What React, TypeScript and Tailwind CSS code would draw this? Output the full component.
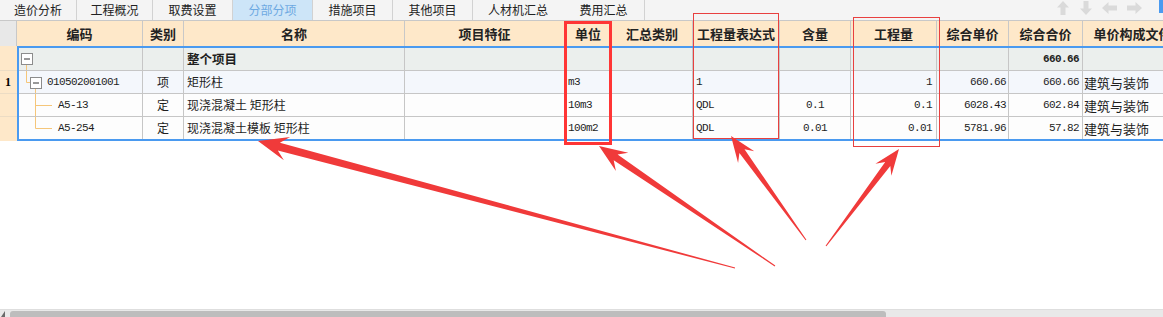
import React from "react";

type Tab = { t: string; w: string; active?: boolean; sep?: boolean };

const tabs: Tab[] = [
  { t: "造价分析", w: "w-[77px]", sep: true },
  { t: "工程概况", w: "w-[76px]", sep: true },
  { t: "取费设置", w: "w-[80px]", sep: true },
  { t: "分部分项", w: "w-[80px]", sep: true, active: true },
  { t: "措施项目", w: "w-[80px]", sep: true },
  { t: "其他项目", w: "w-[80px]", sep: true },
  { t: "人材机汇总", w: "w-[90px]" },
  { t: "费用汇总", w: "w-[82px]", sep: true },
];

type Col = { title: string; hw: string; bw: string };

const cols: Col[] = [
  { title: "编码", hw: "w-[126px]", bw: "w-[124px]" },
  { title: "类别", hw: "w-[41px]", bw: "w-[41px]" },
  { title: "名称", hw: "w-[221px]", bw: "w-[221px]" },
  { title: "项目特征", hw: "w-[160px]", bw: "w-[160px]" },
  { title: "单位", hw: "w-[47px]", bw: "w-[47px]" },
  { title: "汇总类别", hw: "w-[81px]", bw: "w-[81px]" },
  { title: "工程量表达式", hw: "w-[87px]", bw: "w-[87px]" },
  { title: "含量", hw: "w-[71px]", bw: "w-[71px]" },
  { title: "工程量", hw: "w-[86px]", bw: "w-[86px]" },
  { title: "综合单价", hw: "w-[72px]", bw: "w-[72px]" },
  { title: "综合合价", hw: "w-[74px]", bw: "w-[74px]" },
  { title: "单价构成文件", hw: "w-[100px]", bw: "w-[100px]" },
];

const MONO = "font-['Liberation_Mono',monospace] text-[11px] tracking-[-0.6px]";
const TREE = "#f5c67a";

function MinusBox({ x, y }: { x: number; y: number }) {
  return (
    <g>
      <rect x={x + 0.5} y={y + 0.5} width={11} height={11} fill="#ffffff" stroke="#8c8c8c" />
      <line x1={x + 3} y1={y + 6} x2={x + 9} y2={y + 6} stroke="#333333" />
    </g>
  );
}

function TreeArt({ level }: { level: number }) {
  return (
    <svg className="absolute left-0 top-0 pointer-events-none" width={124} height={23}>
      {level === 0 && (
        <>
          <line x1={7.5} y1={16} x2={7.5} y2={23} stroke={TREE} />
          <MinusBox x={2} y={5} />
        </>
      )}
      {level === 1 && (
        <>
          <line x1={7.5} y1={0} x2={7.5} y2={11.5} stroke={TREE} />
          <line x1={7.5} y1={11.5} x2={11} y2={11.5} stroke={TREE} />
          <line x1={16.5} y1={17} x2={16.5} y2={23} stroke={TREE} />
          <MinusBox x={11} y={6} />
        </>
      )}
      {level === 2 && (
        <>
          <line x1={16.5} y1={0} x2={16.5} y2={23} stroke={TREE} />
          <line x1={16.5} y1={11.5} x2={33} y2={11.5} stroke={TREE} />
        </>
      )}
      {level === 3 && (
        <>
          <line x1={16.5} y1={0} x2={16.5} y2={11.5} stroke={TREE} />
          <line x1={16.5} y1={11.5} x2={33} y2={11.5} stroke={TREE} />
        </>
      )}
    </svg>
  );
}

type Row = {
  bg: string;
  h: string;
  level: number;
  code: string;
  type: string;
  name: string;
  bold?: boolean;
  unit: string;
  expr: string;
  qty: string;
  amount: string;
  price: string;
  total: string;
  file: string;
  rn: string;
  last?: boolean;
};

const rows: Row[] = [
  { bg: "bg-[#ebefed]", h: "h-[23px]", level: 0, code: "", type: "", name: "整个项目", bold: true, unit: "", expr: "", qty: "", amount: "", price: "", total: "660.66", file: "", rn: "" },
  { bg: "bg-[#f4f7fc]", h: "h-[23px]", level: 1, code: "010502001001", type: "项", name: "矩形柱", unit: "m3", expr: "1", qty: "", amount: "1", price: "660.66", total: "660.66", file: "建筑与装饰", rn: "1" },
  { bg: "bg-[#fdfdfd]", h: "h-[23px]", level: 2, code: "A5-13", type: "定", name: "现浇混凝土 矩形柱", unit: "10m3", expr: "QDL", qty: "0.1", amount: "0.1", price: "6028.43", total: "602.84", file: "建筑与装饰", rn: "" },
  { bg: "bg-[#fdfdfd]", h: "h-[22px]", level: 3, code: "A5-254", type: "定", name: "现浇混凝土模板 矩形柱", unit: "100m2", expr: "QDL", qty: "0.01", amount: "0.01", price: "5781.96", total: "57.82", file: "建筑与装饰", rn: "", last: true },
];

const cell = "h-full shrink-0 flex items-center border-r border-[#c6c6c6] whitespace-nowrap overflow-hidden leading-none";

function TabBar() {
  return (
    <div className="h-[20px] shrink-0 bg-[#f4f4f4] flex items-stretch text-[12px] leading-none text-[#222]">
      {tabs.map((t) => (
        <div
          key={t.t}
          className={`${t.w} shrink-0 flex items-center justify-center ${t.active ? "bg-[#cde5f8] text-[#6da9e2]" : ""} ${t.sep ? "border-r border-[#d2d2d2]" : ""}`}
        >
          {t.t}
        </div>
      ))}
      <div className="flex-1" />
      <div className="flex items-start pt-[1px] shrink-0">
        <svg width={12} height={14} viewBox="0 0 12 14">
          <polygon points="6,0 12,6.5 8.5,6.5 8.5,14 3.5,14 3.5,6.5 0,6.5" fill="#dadada" />
        </svg>
        <svg className="ml-[11px]" width={12} height={14} viewBox="0 0 12 14">
          <polygon points="6,14 12,7.5 8.5,7.5 8.5,0 3.5,0 3.5,7.5 0,7.5" fill="#dadada" />
        </svg>
        <svg className="ml-[10px] mt-[1px]" width={15} height={12} viewBox="0 0 15 12">
          <polygon points="0,6 6.5,0 6.5,3.5 15,3.5 15,8.5 6.5,8.5 6.5,12" fill="#dadada" />
        </svg>
        <svg className="ml-[10px] mt-[1px]" width={15} height={12} viewBox="0 0 15 12">
          <polygon points="15,6 8.5,0 8.5,3.5 0,3.5 0,8.5 8.5,8.5 8.5,12" fill="#dadada" />
        </svg>
      </div>
      <div className="ml-[17px] w-[4px] h-[13px] bg-[#4a9af0] shrink-0" />
    </div>
  );
}

function Header() {
  return (
    <div className="h-[26px] shrink-0 flex border-t border-[#c8c8c8] bg-[#fee8c9] overflow-hidden">
      <div className="w-[17px] h-full shrink-0 bg-[#e8e8e8] border-r border-[#c8c8c8]" />
      {cols.map((c) => (
        <div
          key={c.title}
          className={`${c.hw} ${cell} justify-center font-bold text-[13px] text-[#222] border-[#c8c8c8]`}
        >
          {c.title}
        </div>
      ))}
    </div>
  );
}

function BodyRow({ r }: { r: Row }) {
  const border = r.last ? "" : "border-b border-[#c6c6c6]";
  const codePad = r.level === 0 ? "" : r.level === 1 ? "pl-[28px]" : "pl-[39px]";
  return (
    <div className={`${r.h} ${r.bg} ${border} flex text-[12px] text-[#1e1e1e]`}>
      <div className={`${cols[0].bw} ${cell} relative ${codePad} ${MONO}`}>
        <TreeArt level={r.level} />
        <span className="relative">{r.code}</span>
      </div>
      <div className={`${cols[1].bw} ${cell} justify-center`}>{r.type}</div>
      <div className={`${cols[2].bw} ${cell} pl-[3px] ${r.bold ? "font-bold text-[12.5px]" : ""}`}>{r.name}</div>
      <div className={`${cols[3].bw} ${cell}`} />
      <div className={`${cols[4].bw} ${cell} pl-[3px] ${MONO}`}>{r.unit}</div>
      <div className={`${cols[5].bw} ${cell}`} />
      <div className={`${cols[6].bw} ${cell} pl-[3px] ${MONO}`}>{r.expr}</div>
      <div className={`${cols[7].bw} ${cell} justify-center ${MONO}`}>{r.qty}</div>
      <div className={`${cols[8].bw} ${cell} justify-end pr-[4px] ${MONO}`}>{r.amount}</div>
      <div className={`${cols[9].bw} ${cell} justify-end pr-[2px] ${MONO}`}>{r.price}</div>
      <div className={`${cols[10].bw} ${cell} justify-end pr-[3px] ${MONO} ${r.bold ? "font-bold" : ""}`}>{r.total}</div>
      <div className={`${cols[11].bw} ${cell} pl-[1px] text-[13px]`}>{r.file}</div>
    </div>
  );
}

function Body() {
  return (
    <div className="flex shrink-0">
      <div className="w-[17px] shrink-0 bg-[#fee8c9] flex flex-col py-[2px]">
        {rows.map((r, i) => (
          <div
            key={i}
            className={`${r.h} flex items-center pl-[5px] font-['Liberation_Serif',serif] font-bold text-[12px] leading-none ${r.last ? "" : "border-b border-[#ecdcc4]"}`}
          >
            {r.rn}
          </div>
        ))}
      </div>
      <div className="flex-1 min-w-0 overflow-hidden border-2 border-r-0 border-[#4a9af0]">
        {rows.map((r, i) => (
          <BodyRow key={i} r={r} />
        ))}
      </div>
    </div>
  );
}

function ScrollBar() {
  return (
    <div className="h-[8px] shrink-0 bg-[#e9e9e9] border-t border-[#dedede] flex items-end">
      <svg width={5} height={6} viewBox="0 0 5 6" className="ml-[1px] shrink-0">
        <polygon points="4,0 4,6 0,6" fill="#6a6a6a" />
      </svg>
      <div className="ml-[4px] w-[876px] h-[6px] bg-[#bdbdbd] rounded-t-[3px]" />
    </div>
  );
}

function arrowPts(tx: number, ty: number, hx: number, hy: number, L = 28, W = 11, w1 = 3.5, w0 = 0.6) {
  const dx = hx - tx;
  const dy = hy - ty;
  const len = Math.hypot(dx, dy);
  const ux = dx / len;
  const uy = dy / len;
  const nx = -uy;
  const ny = ux;
  const kx = hx - ux * L * 0.72;
  const ky = hy - uy * L * 0.72;
  const bx = hx - ux * L;
  const by = hy - uy * L;
  const p = [
    [tx + nx * w0, ty + ny * w0],
    [kx + nx * w1, ky + ny * w1],
    [bx + nx * W, by + ny * W],
    [hx, hy],
    [bx - nx * W, by - ny * W],
    [kx - nx * w1, ky - ny * w1],
    [tx - nx * w0, ty - ny * w0],
  ];
  return p.map((q) => `${q[0].toFixed(1)},${q[1].toFixed(1)}`).join(" ");
}

function Annotations() {
  const red = "#f03a3a";
  return (
    <svg className="absolute left-0 top-0 pointer-events-none" width={1163} height={317}>
      <rect x={565.5} y={22.5} width={45} height={121} fill="none" stroke="#ff3535" strokeWidth={3} />
      <rect x={693.5} y={13.5} width={85} height={125} fill="none" stroke="#e8403f" strokeWidth={1} />
      <rect x={853.5} y={17.5} width={86} height={129} fill="none" stroke="#e8403f" strokeWidth={1} />
      <polygon points={arrowPts(735, 268, 258, 141, 30, 12, 4, 0.5)} fill={red} />
      <polygon points={arrowPts(775, 266, 599, 146, 28, 11, 3.5, 0.5)} fill={red} />
      <polygon points={arrowPts(806, 240, 731, 136, 26, 10, 3.2, 0.5)} fill={red} />
      <polygon points={arrowPts(826, 246, 899, 149, 26, 10, 3.2, 0.5)} fill={red} />
    </svg>
  );
}

export default function App() {
  return (
    <div className="relative w-[1163px] h-[317px] overflow-hidden bg-white flex flex-col font-['Noto_Sans_CJK_SC','Noto_Sans',sans-serif]">
      <TabBar />
      <Header />
      <Body />
      <div className="flex-1" />
      <ScrollBar />
      <Annotations />
    </div>
  );
}
